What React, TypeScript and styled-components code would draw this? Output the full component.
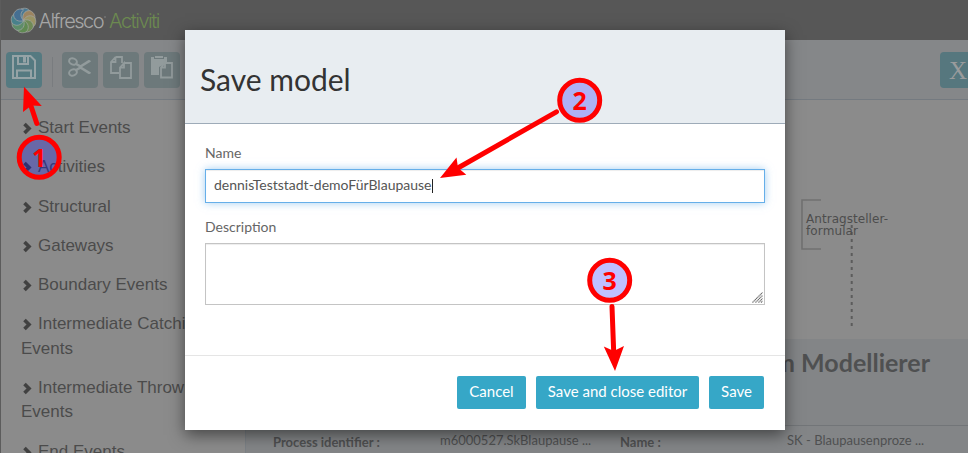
import React from "react";
import styled, { createGlobalStyle } from "styled-components";

const GlobalStyle = createGlobalStyle`
  * { box-sizing: border-box; }
  body { margin: 0; overflow: hidden; font-family: Lato, sans-serif; }
`;

const Page = styled.div`
  position: relative;
  width: 968px;
  height: 453px;
  overflow: hidden;
  display: flex;
  flex-direction: column;
  background: #8b8b8b;
  border-left: 1px solid #5c5c5c;
`;

const TopBar = styled.header`
  flex: 0 0 40px;
  margin-left: -1px;
  padding: 7px 0 0 10px;
  background: #575757;
`;

const Toolbar = styled.div`
  flex: 0 0 60px;
  display: flex;
  gap: 5px;
  padding: 12px 0 0 5px;
  background: #858789;
  border-bottom: 1px solid #747a80;
`;

const ToolButton = styled.div<{ $active?: boolean }>`
  flex: 0 0 36px;
  height: 36px;
  border-radius: 4px;
  background: ${(p) => (p.$active ? "#557a81" : "#6d797b")};
  svg { display: block; }
`;

const Divider = styled.div`
  width: 1px;
  height: 30px;
  margin: 5px 4px 0 5px;
  background: #797c7f;
`;

const CloseButton = styled.div`
  width: 36px;
  height: 36px;
  margin: 0 -8px 0 auto;
  border-radius: 4px;
  background: #56777e;
  color: #999b9c;
  font: 25px/38px "Liberation Serif", serif;
  padding-left: 9px;
`;

const Workspace = styled.div`
  flex: 1;
  min-height: 0;
  display: flex;
`;

const Palette = styled.ul`
  flex: 0 0 245px;
  margin: 0;
  padding: 16px 20px 0 20px;
  border-right: 1px solid #7b8085;
  list-style: none;
  font: 17px/24.3px "Liberation Sans", Arial, sans-serif;
  color: #4b4b4b;
`;

const PaletteItem = styled.li`
  margin-bottom: 15px;
  svg { margin: 0 6px -2px 2px; }
`;

const Main = styled.div`
  flex: 1;
  min-width: 0;
  display: flex;
  flex-direction: column;
`;

const Canvas = styled.div`
  flex: 0 0 239px;
  svg { display: block; }
`;

const Properties = styled.section`
  flex: 1;
  background: #838587;
  color: #4f5051;
`;

const ProcessTitle = styled.h2`
  height: 87px;
  margin: 0;
  padding: 6px 38px 0 0;
  border-bottom: 1px solid #727578;
  text-align: right;
  font: 700 25px/34px Lato, sans-serif;
`;

const PropertyRow = styled.div`
  display: grid;
  grid-template-columns: 167px 180px 167px 1fr;
  padding: 4px 0 0 27px;
  font-size: 13px;
  line-height: 20px;
  white-space: nowrap;
`;

const Label = styled.span`
  padding-top: 2px;
  font-weight: 700;
`;

const Dialog = styled.div`
  position: absolute;
  left: 184px;
  top: 30px;
  width: 600px;
  height: 400px;
  display: flex;
  flex-direction: column;
  background: #fff;
  box-shadow: 0 5px 15px rgba(0, 0, 0, 0.5);
`;

const DialogHeader = styled.div`
  flex: 0 0 94px;
  padding: 27px 15px 0;
  background: #e8edf1;
  border-bottom: 1px solid #9eabb8;
  color: #333;
  font-size: 30px;
  line-height: 44px;
`;

const DialogBody = styled.div`
  flex: 1;
  padding: 19px 20px 0;
  font-size: 14px;
  line-height: 20px;
  color: #666;
`;

const NameInput = styled.div`
  display: flex;
  align-items: center;
  height: 34px;
  margin: 6px 0 14px;
  padding: 0 8px 2px;
  border: 1px solid #66afe9;
  box-shadow: inset 0 1px 1px rgba(0, 0, 0, 0.075), 0 0 8px rgba(102, 175, 233, 0.6);
  color: #555;
`;

const Caret = styled.span`
  width: 1px;
  height: 14px;
  margin-top: 2px;
  background: #222;
`;

const TextArea = styled.div`
  display: flex;
  align-items: flex-end;
  justify-content: flex-end;
  height: 62px;
  margin-top: 6px;
  padding: 1px;
  border: 1px solid #c4c4c4;
  box-shadow: inset 0 1px 1px rgba(0, 0, 0, 0.075);
`;

const DialogFooter = styled.div`
  flex: 0 0 75px;
  display: flex;
  justify-content: flex-end;
  gap: 10px;
  padding: 20px 21px 0;
  border-top: 1px solid #e5e5e5;
`;

const Button = styled.button<{ $width: number }>`
  width: ${(p) => p.$width}px;
  height: 33px;
  padding: 0 0 3px;
  border: 0;
  border-radius: 2px;
  background: #36a7c7;
  color: #fff;
  font: 15px Lato, sans-serif;
  white-space: nowrap;
`;

const Annotations = styled.svg`
  position: absolute;
  left: -1px;
  top: 0;
`;

const petals = ["#4b7a93", "#9c8460", "#9a9464", "#6f8a56", "#5f8a52", "#5e8d6a", "#48818b", "#456f92"];

const Logo = () => (
  <svg width="160" height="28" viewBox="0 0 160 28">
    <g transform="translate(13.5 13.5)">
      {petals.map((color, i) => (
        <path
          key={color}
          transform={`rotate(${i * 45})`}
          d="M0 0C-5-2-6.5-8-2.5-11.5C2-13.5 6.5-11.5 7.5-7.5C3.5-8 0-5 0 0Z"
          fill={color}
          stroke="#a3a6a4"
          strokeWidth="0.7"
        />
      ))}
    </g>
    <g fontFamily="Inter, sans-serif" fontSize="20" fontWeight="300">
      <text x="28.5" y="21" fill="#a6a6a6" textLength="66" lengthAdjust="spacing">Alfresco</text>
      <text x="99" y="21" fill="#6c8a50" textLength="51.5" lengthAdjust="spacing">Activiti</text>
    </g>
    <circle cx="95" cy="10" r="0.7" fill="#929292" />
  </svg>
);

const SaveIcon = () => (
  <svg width="36" height="36" fill="none" stroke="#95a3a6" strokeWidth="2">
    <path d="M7 4H24.5L29 8.5V26H7ZM12 4V12H22V4M11 26V18.5H25V26" />
    <path d="M18.5 5V10.5" strokeWidth="3" />
  </svg>
);

const ScissorsIcon = () => (
  <svg width="36" height="36" fill="none" stroke="#929b9c" strokeWidth="2">
    <ellipse cx="11" cy="9.5" rx="4" ry="3" transform="rotate(20 11 9.5)" />
    <ellipse cx="11" cy="20.5" rx="4" ry="3" transform="rotate(-20 11 20.5)" />
    <path d="M13.5 10.5L18.5 13L26.5 8Q28.5 7.5 29 9.5L20 15L29 20.5Q28.5 22.5 26.5 22L18.5 17L13.5 19.5V17L17 15L13.5 13Z" fill="#929b9c" stroke="none" />
  </svg>
);

const CopyIcon = () => (
  <svg width="36" height="36" fill="none" stroke="#929b9c" strokeWidth="1.8">
    <path d="M12.5 5H19V11M12.5 5L8 10V21H16M12.5 5V10H8M21 11H28V26H17V15.5L21 11V15.5H17" />
  </svg>
);

const PasteIcon = () => (
  <svg width="36" height="36">
    <path d="M7 5H10V7H20V5H23V11L15 15V23H7Z" fill="#929b9c" />
    <path d="M11 4H19V6H11Z" fill="#929b9c" />
    <path d="M21 11H28V25.5H17V15.5L21 11V15.5H17" fill="#6d797b" stroke="#929b9c" strokeWidth="1.8" />
  </svg>
);

const Chevron = () => (
  <svg width="9" height="13" viewBox="0 0 9 13">
    <path d="M1.5 2L6 6.5L1.5 11" fill="none" stroke="#414141" strokeWidth="3.6" />
  </svg>
);

const ResizeGrip = () => (
  <svg width="11" height="11" stroke="#666" strokeWidth="1.1" strokeDasharray="1.3 0.4">
    <path d="M0.5 10.5L10.5 0.5M3.5 10.5L10.5 3.5M6.5 10.5L10.5 6.5M9 10.5L10.5 9" />
  </svg>
);

const groups = [
  "Start Events",
  "Activities",
  "Structural",
  "Gateways",
  "Boundary Events",
  "Intermediate Catching Events",
  "Intermediate Throwing Events",
  "End Events",
];

const steps = [
  { n: 1, x: 39.2, y: 157.3 },
  { n: 2, x: 579.7, y: 100.3 },
  { n: 3, x: 609.7, y: 280.3 },
];

export default function App() {
  return (
    <>
      <GlobalStyle />
      <Page>
        <TopBar>
          <Logo />
        </TopBar>
        <Toolbar>
          <ToolButton $active><SaveIcon /></ToolButton>
          <Divider />
          <ToolButton><ScissorsIcon /></ToolButton>
          <ToolButton><CopyIcon /></ToolButton>
          <ToolButton><PasteIcon /></ToolButton>
          <CloseButton>X</CloseButton>
        </Toolbar>
        <Workspace>
          <Palette>
            {groups.map((name) => (
              <PaletteItem key={name}><Chevron />{name}</PaletteItem>
            ))}
          </Palette>
          <Main>
            <Canvas>
              <svg width="722" height="239" viewBox="246 100 722 239">
                <path d="M821 200H802V249H821" fill="none" stroke="#727272" strokeWidth="1.7" />
                <path d="M851.7 225V327" stroke="#5c5c5c" strokeWidth="2" strokeDasharray="3 4" />
                <g fontFamily="DejaVu Sans, sans-serif" fontSize="12" fill="#4d4d4d">
                  <text x="806" y="223" textLength="82">Antragsteller-</text>
                  <text x="806" y="235" textLength="52">formular</text>
                </g>
              </svg>
            </Canvas>
            <Properties>
              <ProcessTitle>Blaupause zum Modellierer</ProcessTitle>
              <PropertyRow>
                <Label>Process identifier :</Label>
                <span>m6000527.SkBlaupause ...</span>
                <Label>Name :</Label>
                <span>SK - Blaupausenproze ...</span>
              </PropertyRow>
            </Properties>
          </Main>
        </Workspace>
        <Dialog>
          <DialogHeader>Save model</DialogHeader>
          <DialogBody>
            <div>Name</div>
            <NameInput>dennisTeststadt-demoFürBlaupause<Caret /></NameInput>
            <div>Description</div>
            <TextArea><ResizeGrip /></TextArea>
          </DialogBody>
          <DialogFooter>
            <Button $width={69}>Cancel</Button>
            <Button $width={163}>Save and close editor</Button>
            <Button $width={55}>Save</Button>
          </DialogFooter>
        </Dialog>
        <Annotations width="968" height="453">
          <g stroke="#f00" strokeWidth="5" strokeLinecap="round">
            <path d="M36.8 123.5L31 106" />
            <path d="M556.5 111.8L457 168.5" />
            <path d="M612 306.5L613.7 352" />
          </g>
          <g fill="#f00">
            <path d="M24 86.7L41.8 106L31.5 105.5L23 112Z" />
            <path d="M440 178L456.5 157.5L458 167.8L466.3 174.7Z" />
            <path d="M615 371L603.8 346.5L613.8 351L624 346Z" />
          </g>
          {steps.map((s) => (
            <g key={s.n}>
              <circle cx={s.x} cy={s.y} r="20" fill="rgba(0,0,255,0.25)" stroke="#f00" strokeWidth="5" />
              <text x={s.x} y={s.y + 9.3} textAnchor="middle" fill="#f00" fontFamily="Noto Sans, sans-serif" fontWeight="700" fontSize="25">{s.n}</text>
            </g>
          ))}
        </Annotations>
      </Page>
    </>
  );
}
